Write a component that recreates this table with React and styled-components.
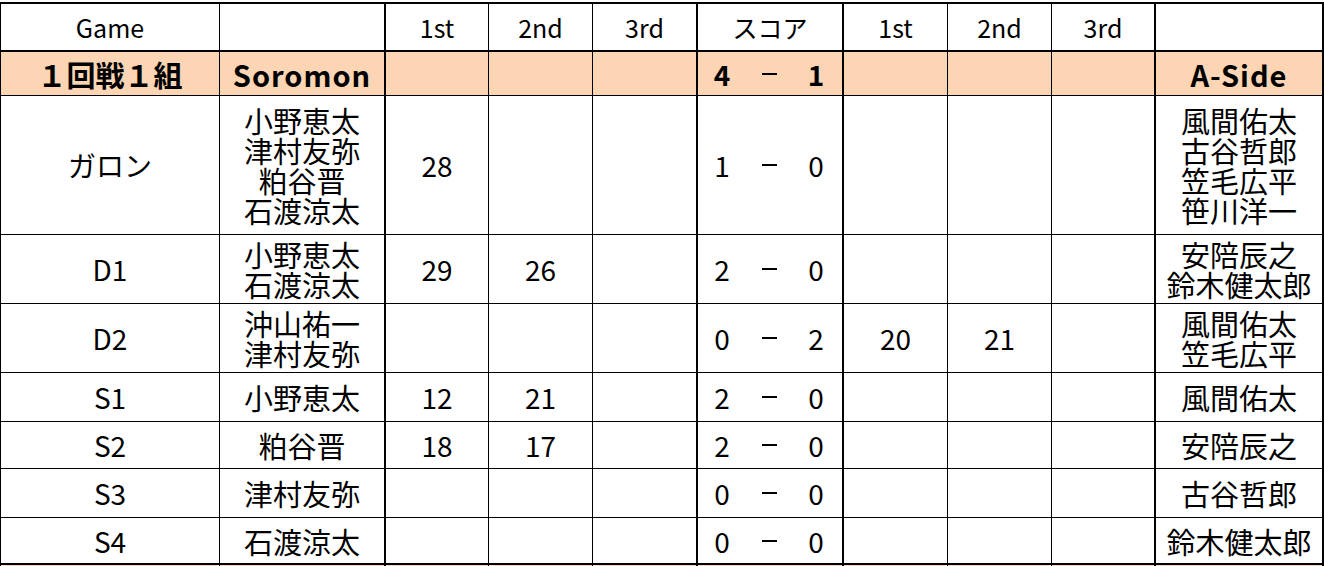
import React from 'react';
import styled, { createGlobalStyle } from 'styled-components';

const GlobalStyle = createGlobalStyle`
  html, body {
    margin: 0;
    padding: 0;
    background: #ffffff;
    overflow: hidden;
  }
  body {
    font-family: "Noto Sans CJK JP", "Noto Sans", sans-serif;
    color: #000;
  }
`;

const COLS = '219px 166px 103px 104px 105px 146px 104px 104px 104px 168px';
// columns whose right edge is drawn with the heavy rule
const THICK = [false, true, false, false, true, true, false, false, true, true];

const matches = [
  {
    game: 'ガロン',
    left: ['小野恵太', '津村友弥', '粕谷晋', '石渡涼太'],
    l: ['28', '', ''],
    score: ['1', '0'],
    r: ['', '', ''],
    right: ['風間佑太', '古谷哲郎', '笠毛広平', '笹川洋一'],
    h: 139,
  },
  {
    game: 'D1',
    left: ['小野恵太', '石渡涼太'],
    l: ['29', '26', ''],
    score: ['2', '0'],
    r: ['', '', ''],
    right: ['安陪辰之', '鈴木健太郎'],
    h: 69,
  },
  {
    game: 'D2',
    left: ['沖山祐一', '津村友弥'],
    l: ['', '', ''],
    score: ['0', '2'],
    r: ['20', '21', ''],
    right: ['風間佑太', '笠毛広平'],
    h: 69,
  },
  { game: 'S1', left: ['小野恵太'], l: ['12', '21', ''], score: ['2', '0'], r: ['', '', ''], right: ['風間佑太'], h: 49 },
  { game: 'S2', left: ['粕谷晋'], l: ['18', '17', ''], score: ['2', '0'], r: ['', '', ''], right: ['安陪辰之'], h: 47 },
  { game: 'S3', left: ['津村友弥'], l: ['', '', ''], score: ['0', '0'], r: ['', '', ''], right: ['古谷哲郎'], h: 49 },
  { game: 'S4', left: ['石渡涼太'], l: ['', '', ''], score: ['0', '0'], r: ['', '', ''], right: ['鈴木健太郎'], h: 47, bottom: 2 },
];

function App() {
  return (
    <>
      <GlobalStyle />
      <Sheet>
        <Row $h={48} $bottom={2}>
          <Cell $thick={THICK[0]}><HeadText>Game</HeadText></Cell>
          <Cell $thick={THICK[1]} />
          <Cell $thick={THICK[2]}><HeadText>1st</HeadText></Cell>
          <Cell $thick={THICK[3]}><HeadText>2nd</HeadText></Cell>
          <Cell $thick={THICK[4]}><HeadText>3rd</HeadText></Cell>
          <Cell $thick={THICK[5]}><HeadText>スコア</HeadText></Cell>
          <Cell $thick={THICK[6]}><HeadText>1st</HeadText></Cell>
          <Cell $thick={THICK[7]}><HeadText>2nd</HeadText></Cell>
          <Cell $thick={THICK[8]}><HeadText>3rd</HeadText></Cell>
          <Cell $thick={THICK[9]} />
        </Row>

        <Row $h={44} $bottom={1} $bg="#fcd5b4">
          <Cell $thick={THICK[0]}><TeamText>１回戦１組</TeamText></Cell>
          <Cell $thick={THICK[1]}><TeamText $latin>Soromon</TeamText></Cell>
          <Cell $thick={THICK[2]} />
          <Cell $thick={THICK[3]} />
          <Cell $thick={THICK[4]} />
          <Cell $thick={THICK[5]}>
            <Score $bold>
              <span>4</span>
              <Dash />
              <span>1</span>
            </Score>
          </Cell>
          <Cell $thick={THICK[6]} />
          <Cell $thick={THICK[7]} />
          <Cell $thick={THICK[8]} />
          <Cell $thick={THICK[9]}><TeamText $latin>A-Side</TeamText></Cell>
        </Row>

        {matches.map((m) => (
          <Row key={m.game} $h={m.h} $bottom={m.bottom || 1}>
            <Cell $thick={THICK[0]}><BodyText>{m.game}</BodyText></Cell>
            <Cell $thick={THICK[1]}>
              <Names>{m.left.map((n) => <div key={n}>{n}</div>)}</Names>
            </Cell>
            {m.l.map((v, i) => (
              <Cell key={'l' + i} $thick={THICK[2 + i]}><BodyText>{v}</BodyText></Cell>
            ))}
            <Cell $thick={THICK[5]}>
              <Score>
                <span>{m.score[0]}</span>
                <Dash />
                <span>{m.score[1]}</span>
              </Score>
            </Cell>
            {m.r.map((v, i) => (
              <Cell key={'r' + i} $thick={THICK[6 + i]}><BodyText>{v}</BodyText></Cell>
            ))}
            <Cell $thick={THICK[9]}>
              <Names>{m.right.map((n) => <div key={n}>{n}</div>)}</Names>
            </Cell>
          </Row>
        ))}

        <Row $h={20} $bg="#fcd5b4">
          {THICK.map((t, i) => <Cell key={i} $thick={t} />)}
        </Row>
      </Sheet>
    </>
  );
}

const Sheet = styled.div`
  margin-top: 2px;
  width: 1324px;
  box-sizing: border-box;
  border-top: 2px solid #000;
  border-left: 1px solid #000;
  display: flex;
  flex-direction: column;
`;

const Row = styled.div`
  display: grid;
  grid-template-columns: ${COLS};
  height: ${(p) => p.$h}px;
  box-sizing: border-box;
  border-bottom: ${(p) => (p.$bottom ? `${p.$bottom}px solid #000` : 'none')};
  background: ${(p) => p.$bg || '#ffffff'};
  flex-shrink: 0;
`;

const Cell = styled.div`
  box-sizing: border-box;
  min-height: 0;
  border-right: ${(p) => (p.$thick ? 2 : 1)}px solid #000;
  display: flex;
  align-items: center;
  justify-content: center;
  text-align: center;
`;

const HeadText = styled.span`
  font-size: 25px;
  line-height: 1;
  padding-top: 1px;
`;

const TeamText = styled.span`
  font-size: 29px;
  font-weight: 700;
  line-height: 1;
  letter-spacing: ${(p) => (p.$latin ? '1px' : '0')};
  padding-top: 2px;
`;

const BodyText = styled.span`
  font-size: 28px;
  line-height: 1;
`;

const Names = styled.div`
  font-size: 29px;
  line-height: 30px;
  white-space: nowrap;
`;

const Score = styled.div`
  width: 100%;
  display: grid;
  grid-template-columns: 48px 46px 48px;
  align-items: center;
  justify-items: center;
  font-size: 28px;
  font-weight: ${(p) => (p.$bold ? 700 : 400)};
  line-height: 1;
`;

const Dash = styled.span`
  display: block;
  width: 15px;
  height: 2px;
  background: #000;
`;

export default App;
